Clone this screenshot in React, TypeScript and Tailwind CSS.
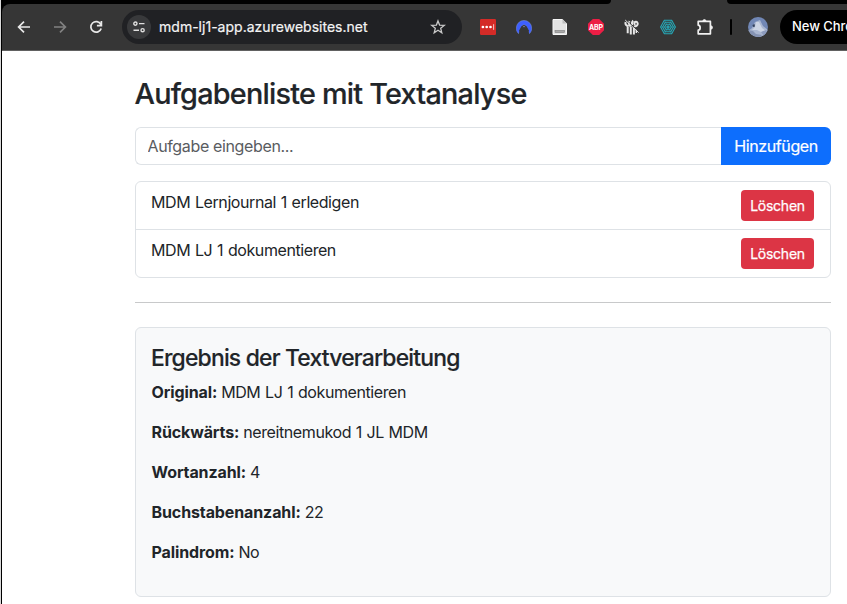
import type { ReactNode } from "react";

function Toolbar() {
  return (
    <header className="h-[51px] bg-black">
      <div className="flex h-1 bg-[#363636]">
        <div className="w-[609px] rounded-br-[5px] bg-black" />
        <div className="w-[116px]" />
        <div className="flex-1 rounded-bl-[5px] bg-black" />
      </div>
      <div className="flex h-[47px] items-center overflow-hidden rounded-tl-[8px] border-b border-[#616161] bg-[#363636]">
        <svg className="ml-[15px] shrink-0" width="14" height="14" viewBox="0 0 14 14" fill="none" stroke="#e8e8e8" strokeWidth="1.7">
          <path d="M13 7H2M7 1.6 1.6 7 7 12.4" />
        </svg>
        <svg className="ml-[22px] shrink-0" width="14" height="14" viewBox="0 0 14 14" fill="none" stroke="#818181" strokeWidth="1.7">
          <path d="M1 7h11M7 1.6 12.4 7 7 12.4" />
        </svg>
        <svg className="ml-[22px] shrink-0" width="14" height="14" viewBox="0 0 14 14" fill="none" stroke="#e8e8e8" strokeWidth="1.7">
          <path d="M11.8 4.3A5.3 5.3 0 1 0 12.2 8.5M12.4 1v4.6H7.9" />
        </svg>

        <div className="ml-[19px] flex h-[34px] w-[340px] shrink-0 items-center rounded-full bg-[#202124] pl-[5px] pr-4">
          <span className="flex h-6 w-6 items-center justify-center rounded-full bg-[#38393b]">
            <svg width="12" height="12" viewBox="0 0 12 12" fill="none" stroke="#dfdfdf" strokeWidth="1.4">
              <circle cx="2.4" cy="2.6" r="1.6" />
              <path d="M6 2.6h5.5M.5 9.2H6" />
              <circle cx="9.6" cy="9.2" r="1.6" />
            </svg>
          </span>
          <span className="ml-2 flex-1 whitespace-nowrap text-[14px] leading-5 tracking-[0.02px] text-[#f4f4f4] [-webkit-text-stroke:0.2px_#f4f4f4]">
            mdm-lj1-app.azurewebsites.net
          </span>
          <svg width="16" height="16" viewBox="0 0 16 16" fill="none" stroke="#c9c9c9" strokeWidth="1.3">
            <path d="m8 1.9 1.6 4.2 4.7.3-3.6 2.9 1.1 4.5L8 11.3l-3.8 2.5 1.1-4.5-3.6-2.9 4.7-.3z" />
          </svg>
        </div>

        <svg className="ml-[18px] shrink-0" width="16" height="16" viewBox="0 0 16 16">
          <rect width="16" height="16" rx="1.2" fill="#d42b27" />
          <g fill="#fff">
            <circle cx="2.9" cy="8" r="1.35" />
            <circle cx="6.7" cy="8" r="1.35" />
            <circle cx="10.5" cy="8" r="1.35" />
            <rect x="13.2" y="5.2" width="0.9" height="5.6" opacity=".8" />
          </g>
        </svg>
        <svg className="ml-5 shrink-0" width="16" height="16" viewBox="0 0 16 16">
          <path
            d="M2.5 14.6C1.2 13.3.3 11.4.3 9.2A7.7 7.7 0 0 1 8 1.4a7.7 7.7 0 0 1 7.7 7.8c0 2.2-.9 4.1-2.2 5.4L10.8 8.2 9.8 7 8 5.4 6.2 7 5.2 8.2z"
            fill="#3e5fff"
            stroke="#7d96e8"
            strokeWidth=".5"
          />
          <path d="M3.6 15.4 3.1 11.6 5.2 7.4 8 5.8l2.8 1.6 2.1 4.2-.5 3.8z" fill="#363636" />
          <path d="m6.7 8.6 1.3-2 1.3 2-1.3-.8z" fill="#8c98c9" />
        </svg>
        <svg className="ml-5 shrink-0" width="16" height="16" viewBox="0 0 16 16">
          <path d="M1 .5h9.5l4 4v11H1z" fill="#e3e3e3" stroke="#f6f6f6" />
          <path d="M10.5 0 15 4.5h-4.5z" fill="#bdbdbd" />
          <rect x="3" y="11.5" width="9.5" height="2" fill="#a9a9a9" stroke="#7c7c7c" strokeWidth=".6" />
        </svg>
        <span className="ml-5 flex h-4 w-4 shrink-0 items-center justify-center bg-[#ed1e45] text-[7px] font-bold leading-none tracking-[-0.1px] text-white [clip-path:polygon(30%_0,70%_0,100%_30%,100%_70%,70%_100%,30%_100%,0_70%,0_30%)]">
          ABP
        </span>
        <svg className="ml-5 shrink-0" width="16" height="16" viewBox="0 0 16 16" fill="none" stroke="#e6e6e6">
          <path strokeWidth="2" d="M3.7 8v6.2M6.8 8v7.6M9.9 9v6.6" />
          <path strokeWidth="1.4" d="M12.3 10.5v3.4" />
          <path strokeWidth="2.1" d="M4.6 7.2C2.4 7 1 5.4 1.6 3M6.8 7.6C4.8 6 4.6 3.6 5.6 2.2M8 6C7.8 4.2 8 2.6 9.2 1.6" />
          <path strokeWidth="2" d="M9.6 7.4c2.6.3 4.4-1.2 4.1-3.1-.3-1.8-2.6-1.9-3.3-.6-.4 1 .2 1.9 1.2 1.9" />
          <path stroke="#363636" strokeWidth=".9" d="M2.4 1.2 15.4 12.8" />
          <path strokeWidth="1" d="M1.2 1 14.6 13.6" />
        </svg>
        <svg className="ml-5 shrink-0" width="16" height="16" viewBox="0 0 16 16" fill="none" stroke="#27a9b8" strokeWidth="1.05">
          <path d="M4.3 1.2h7.4L15.4 8l-3.7 6.8H4.3L.6 8zM5.2 3.2h5.6L13.4 8l-2.6 4.8H5.2L2.6 8zM6.2 5.2h3.6L11.4 8l-1.6 2.8H6.2L4.6 8z" />
          <path strokeWidth=".5" d="m4.3 1.2 7.4 13.6M11.7 1.2 4.3 14.8M.6 8h14.8" />
          <circle cx="8" cy="8" r="1.1" />
        </svg>
        <svg className="ml-5 shrink-0" width="18" height="18" viewBox="0 0 18 18" fill="none" stroke="#f0f0f0" strokeWidth="1.7" strokeLinejoin="round">
          <path d="M2.2 3.4h12.2v12.4H2.2v-3.6c2.6-.2 2.6-4.8 0-5z" />
          <path d="M6.9 3a1.5 1.5 0 0 1 3 0zM14.8 7.8a1.6 1.6 0 0 1 0 3.4z" fill="#f0f0f0" strokeWidth=".8" />
        </svg>
        <span className="ml-4 h-4 w-0.5 shrink-0 rounded-full bg-black" />
        <svg className="ml-4 shrink-0" width="20" height="20" viewBox="0 0 20 20">
          <clipPath id="face">
            <circle cx="10" cy="10" r="10" />
          </clipPath>
          <g clipPath="url(#face)">
            <rect width="20" height="20" fill="#7187b5" />
            <path d="M0 14 4 11l3-6 5-2 3 6 5 4v7H0z" fill="#a9b6d0" />
            <path d="m4 13 3-3 1-5 3 0 3 6 4 3-5 1-4-2z" fill="#ccd4e4" />
            <path d="m0 13 5 1 3 3 6 1-2 2H0z" fill="#8492b2" />
            <path d="m13 15 5-2 2 2-4 4z" fill="#8c9bbd" />
            <path d="m4.5 8 2-1 .5 2.5L5 10z" fill="#34415b" />
          </g>
        </svg>
        <div className="ml-3 flex h-[34px] w-[130px] shrink-0 items-center whitespace-nowrap rounded-full bg-black pl-3 text-[13px] font-medium tracking-[-0.05px] text-white">
          New Chro
        </div>
      </div>
    </header>
  );
}

function Task({ children }: { children: ReactNode }) {
  return (
    <li className="flex h-12 items-start justify-between pl-[15px] pr-4 pt-2 not-first:border-t not-first:border-[#dee2e6] first:h-[47px]">
      <span className="leading-6 tracking-[-0.42px] [word-spacing:0.7px]">{children}</span>
      <button className="h-[31px] w-[73px] rounded-[4px] bg-[#dc3545] text-[14px] leading-[21px] tracking-[-0.25px] text-white [-webkit-text-stroke:0.25px_white]">
        Löschen
      </button>
    </li>
  );
}

function Result({ label, value }: { label: string; value: string }) {
  return (
    <p className="mb-4 whitespace-nowrap leading-6">
      <strong className="mr-1 font-bold tracking-[-0.11px]">{label}</strong>
      <span className="tracking-[-0.41px] [word-spacing:0.6px]">{value}</span>
    </p>
  );
}

export default function App() {
  return (
    <div className="flex h-[604px] w-[847px] overflow-hidden bg-white font-['Inter','Liberation_Sans',sans-serif] text-[16px] text-[#212529]">
      <div className="w-0.5 shrink-0 border-l border-[#d9d9d9] bg-black" />
      <div className="min-w-0 flex-1">
        <Toolbar />
        <main className="ml-[133px] w-[696px] pt-[26px]">
          <h1 className="-ml-[0.5px] mb-4 whitespace-nowrap text-[28.8px] font-medium leading-[34px] tracking-[-0.77px] [-webkit-text-stroke:0.2px_#212529]">
            Aufgabenliste mit Textanalyse
          </h1>
          <form className="flex h-[38px]">
            <input
              className="h-[38px] min-w-0 flex-1 rounded-l-[6px] border border-r-0 border-[#dee2e6] pl-[11.5px] pr-3 tracking-[-0.36px] outline-none placeholder:text-[#595c5f]"
              placeholder="Aufgabe eingeben..."
            />
            <button type="button" className="w-[110px] rounded-r-[6px] bg-[#0d6efd] tracking-[-0.38px] text-white [-webkit-text-stroke:0.2px_white]">
              Hinzufügen
            </button>
          </form>
          <ul className="mt-4 h-[97px] rounded-[6px] border border-[#dee2e6]">
            <Task>MDM Lernjournal 1 erledigen</Task>
            <Task>MDM LJ 1 dokumentieren</Task>
          </ul>
          <hr className="my-6 border-[#c8c9ca]" />
          <section className="h-[270px] rounded-[6px] border border-[#dee2e6] bg-[#f8f9fa] pl-[15.5px] pt-4">
            <h2 className="-ml-[0.5px] mb-2 whitespace-nowrap text-[22.9px] font-medium leading-7 tracking-[-0.81px] [-webkit-text-stroke:0.15px_#212529]">
              Ergebnis der Textverarbeitung
            </h2>
            <Result label="Original:" value="MDM LJ 1 dokumentieren" />
            <Result label="Rückwärts:" value="nereitnemukod 1 JL MDM" />
            <Result label="Wortanzahl:" value="4" />
            <Result label="Buchstabenanzahl:" value="22" />
            <Result label="Palindrom:" value="No" />
          </section>
        </main>
      </div>
    </div>
  );
}
